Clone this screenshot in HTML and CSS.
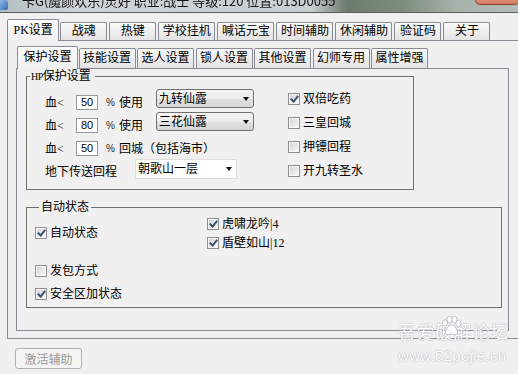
FILE: index.html
```html
<!DOCTYPE html>
<html lang="zh-CN">
<head>
    <meta charset="UTF-8">
    <meta name="viewport" content="width=device-width, initial-scale=1.0">
    <title>PK设置</title>
    <link rel="stylesheet" href="styles.css">
</head>
<body>
    <div class="titlebar">
        <span class="app-icon"></span>
        <span class="title-text">卡G(魔颜欢乐)灵好 职业:战士 等级:120 位置:013D0055</span>
        <span class="close-btn"></span>
    </div>
    <div class="window">
        <div class="tabs main-tabs">
            <div class="tab active"><span class="latin">PK</span>设置</div>
            <div class="tab">战魂</div>
            <div class="tab">热键</div>
            <div class="tab">学校挂机</div>
            <div class="tab">喊话元宝</div>
            <div class="tab">时间辅助</div>
            <div class="tab">休闲辅助</div>
            <div class="tab">验证码</div>
            <div class="tab">关于</div>
        </div>
        <div class="panel outer-panel">
            <div class="tabs sub-tabs">
                <div class="tab active">保护设置</div>
                <div class="tab">技能设置</div>
                <div class="tab">选人设置</div>
                <div class="tab">锁人设置</div>
                <div class="tab">其他设置</div>
                <div class="tab">幻师专用</div>
                <div class="tab">属性增强</div>
            </div>
            <div class="panel inner-panel">
                <fieldset class="group hp-group">
                    <legend><span class="hp">HP</span>保护设置</legend>
                    <div class="group-body">
                        <div class="hp-left">
                            <div class="row">
                                <span class="lbl">血&lt;</span><span class="num">50</span><span class="pct">%</span><span>使用</span>
                                <div class="combo"><span>九转仙露</span><i class="arrow"></i></div>
                            </div>
                            <div class="row">
                                <span class="lbl">血&lt;</span><span class="num">80</span><span class="pct">%</span><span>使用</span>
                                <div class="combo"><span>三花仙露</span><i class="arrow"></i></div>
                            </div>
                            <div class="row">
                                <span class="lbl">血&lt;</span><span class="num">50</span><span class="pct">%</span><span>回城（包括海市）</span>
                            </div>
                            <div class="row">
                                <span>地下传送回程</span>
                                <div class="combo flat"><span>朝歌山一层</span><i class="arrow"></i></div>
                            </div>
                        </div>
                        <div class="hp-right">
                            <div class="check"><span class="box on"></span>双倍吃药</div>
                            <div class="check"><span class="box"></span>三皇回城</div>
                            <div class="check"><span class="box"></span>押镖回程</div>
                            <div class="check"><span class="box"></span>开九转圣水</div>
                        </div>
                    </div>
                </fieldset>
                <fieldset class="group auto-group">
                    <legend>自动状态</legend>
                    <div class="group-body">
                        <div class="auto-left">
                            <div class="check"><span class="box on"></span>自动状态</div>
                            <div class="check spaced"><span class="box"></span>发包方式</div>
                            <div class="check"><span class="box on"></span>安全区加状态</div>
                        </div>
                        <div class="auto-right">
                            <div class="check"><span class="box on"></span>虎啸龙吟<span class="latin">|4</span></div>
                            <div class="check"><span class="box on"></span>盾壁如山<span class="latin">|12</span></div>
                        </div>
                    </div>
                </fieldset>
            </div>
        </div>
        <button class="activate" disabled>激活辅助</button>
    </div>
    <div class="watermark">
        <svg class="paw" width="22" height="20" viewBox="0 0 22 20">
            <g fill="#fff" stroke="#b9bec4" stroke-width="1">
                <ellipse cx="5" cy="7" rx="2.6" ry="3.2"/>
                <ellipse cx="9.5" cy="3.5" rx="2.6" ry="3.2"/>
                <ellipse cx="14.5" cy="3.5" rx="2.6" ry="3.2"/>
                <ellipse cx="18.5" cy="7.5" rx="2.6" ry="3.2"/>
                <path d="M11.5 9c3 0 6 4.5 6 7.5 0 2-2 2.5-3.5 2-1.2-.4-1.8-.6-2.5-.6s-1.3.2-2.5.6c-1.5.5-3.5 0-3.5-2C5.5 13.5 8.5 9 11.5 9z"/>
            </g>
        </svg>
        <div class="wm-title">吾爱破解论坛</div>
        <div class="wm-url">www.52pojie.cn</div>
    </div>
</body>
</html>
```

FILE: styles.css
```css
* { box-sizing: border-box; }
body { margin: 0; width: 518px; height: 374px; overflow: hidden; position: relative; background: #f0f0f0; color: #000; font-family: "Liberation Serif", "Noto Sans CJK SC", serif; font-size: 12px; line-height: 16px; }

.titlebar { height: 13px; display: flex; position: relative; overflow: hidden; border-bottom: 1px solid #555f5a; background: linear-gradient(to right, #b4bec2 0%, #cfd5d7 15%, #c8cfd0 60%, #6d7a6e 67%, #7f8d80 78%, #a8b2aa 88%, #b3bbb9 100%); }
.app-icon { width: 10px; height: 10px; margin-left: -2px; border-radius: 2px; background: linear-gradient(135deg, #9cc4ec, #2f6bb5); flex: none; }
.title-text { margin: -7px 0 0 14px; font-family: "Noto Sans CJK SC", sans-serif; font-size: 13px; line-height: 15px; white-space: nowrap; color: #151515; filter: blur(0.4px); }
.close-btn { position: absolute; right: -2px; top: -10px; width: 45px; height: 15px; border: 1px solid #923e28; border-radius: 0 0 5px 5px; background: linear-gradient(#eab29c, #d27c62); }

.window { padding: 6px 0 0 7px; }

.tabs { display: flex; align-items: flex-end; position: relative; z-index: 1; }
.tab { min-width: 47px; padding: 0 3.5px; margin-right: 2px; border: 1px solid #898c95; border-bottom: 0; border-radius: 2px 2px 0 0; background: linear-gradient(#f8f8f8, #e3e3e3); text-align: center; white-space: nowrap; }
.tab.active { margin-bottom: -1px; margin-right: 1px; padding: 0 5.5px; background: linear-gradient(#fbfbfb, #f0f0f0); }
.latin { font-family: "Liberation Serif", serif; }

.main-tabs { height: 21px; }
.main-tabs .tab { height: 18px; line-height: 17px; }
.main-tabs .tab.active { height: 22px; line-height: 21px; }

.sub-tabs { height: 22px; margin-left: 1px; }
.sub-tabs .tab { height: 20px; line-height: 19px; margin-right: 1.5px; }
.sub-tabs .tab.active { height: 23px; line-height: 21px; margin-right: 0.5px; }

.panel { border: 1px solid #898c95; background: #f0f0f0; }
.outer-panel { width: 514px; padding: 5px 11px 7px 8px; }
.inner-panel { height: 263px; padding: 0 6px 0 9px; }

.group { margin: 0; padding: 0; min-width: 0; border: 1px solid #6f6f6f; }
.group legend { font-size: 12px; line-height: 14px; }
.group-body { display: flex; }

.hp-group { width: 388px; }
.hp-group legend { margin-left: 3px; padding: 0 4px 0 1px; }
.hp { font-size: 10px; letter-spacing: -0.5px; }
.hp-left { width: 261px; padding: 7px 0 6px 18px; }
.hp-right { padding-top: 3px; }
.hp-right .check { height: 24px; }

.row { display: flex; align-items: center; height: 23px; white-space: nowrap; }
.lbl { width: 31px; }
.num { width: 22px; height: 15px; border: 1px solid #979797; background: #fff; font-family: "Liberation Sans", sans-serif; font-size: 11px; line-height: 13px; text-align: center; }
.pct { margin: 0 4px 0 8px; font-family: "Liberation Sans", sans-serif; font-size: 10px; color: #2a2a2a; }

.combo { display: flex; align-items: center; justify-content: space-between; width: 98px; height: 19px; margin: -8px 0 0 13px; padding: 0 4px 0 2px; border: 1px solid #707070; border-radius: 3px; background: linear-gradient(#f4f4f4, #ececec 50%, #e0e0e0 51%, #d6d6d6); }
.combo.flat { width: 102px; height: 20px; margin: -5px 0 0 18px; padding: 0 4px 0 2px; border-color: #dedede; border-radius: 0; background: #fff; }
.arrow { width: 0; height: 0; border-left: 3.5px solid transparent; border-right: 3.5px solid transparent; border-top: 4px solid #111; }

.check { display: flex; align-items: center; white-space: nowrap; }
.box { position: relative; flex: none; width: 12px; height: 12px; margin-right: 3px; border: 1px solid #8e8f8f; background: linear-gradient(135deg, #cfcfcf 0%, #e9e9e9 55%, #fbfbfb 100%); box-shadow: inset 0 0 0 1px #f6f6f6; }
.box.on::after { content: ""; position: absolute; left: 3px; top: 0; width: 3px; height: 6px; border: solid #3e5070; border-width: 0 2px 2px 0; transform: rotate(40deg); }

.auto-group { width: 476px; margin-top: 10px; }
.auto-group legend { margin-left: 12px; padding: 0 2px; }
.auto-left { width: 180px; padding: 9px 0 3px 8px; }
.auto-left .check { height: 20px; margin-bottom: 3px; }
.auto-left .check:last-child { margin-bottom: 0; }
.auto-left .check.spaced { margin-top: 18px; }
.auto-right .check { height: 19px; }

.activate { display: block; width: 67px; height: 21px; margin: 9px 0 0 8px; padding: 0; border: 1px solid #adb2b5; border-radius: 3px; background: #f4f4f4; color: #9a9a9a; font-family: "Noto Sans CJK SC", sans-serif; font-size: 12px; line-height: 19px; }

.watermark { position: absolute; left: 398px; top: 320px; width: 114px; color: #fff; font-family: "Noto Sans CJK SC", sans-serif; text-shadow: 0 0 1px #9ea4aa, 0 0 2px #b9bec3; opacity: 0.92; }
.paw { position: absolute; left: 42px; top: -4px; }
.wm-title { font-size: 18px; line-height: 22px; letter-spacing: 0.5px; }
.wm-url { margin-top: 6px; font-family: "Liberation Sans", sans-serif; font-size: 15px; line-height: 16px; letter-spacing: 0.3px; }
```
